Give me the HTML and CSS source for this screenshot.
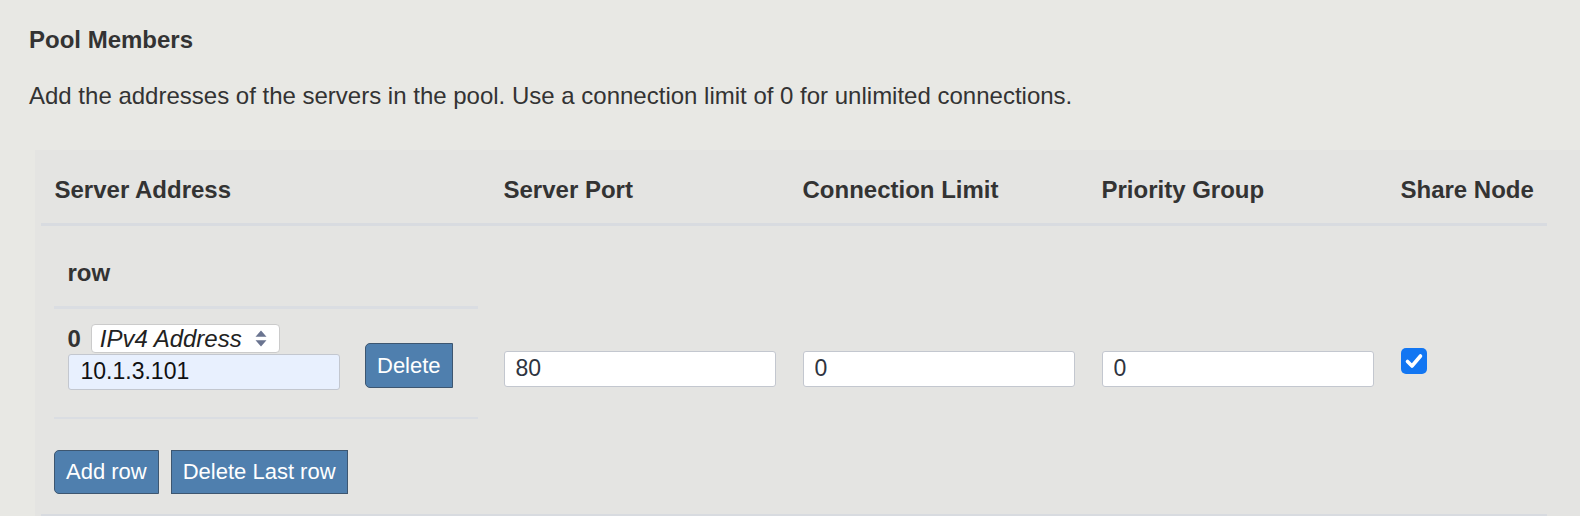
FILE: index.html
```html
<!DOCTYPE html>
<html lang="en">
<head>
<meta charset="utf-8">
<title>Pool Members</title>
<link rel="stylesheet" href="styles.css">
</head>
<body>
<div class="page">
  <h2 class="title">Pool Members</h2>
  <p class="desc">Add the addresses of the servers in the pool. Use a connection limit of 0 for unlimited connections.</p>
  <div class="panel">
    <table class="members">
      <colgroup>
        <col class="w-addr"><col class="w-mid"><col class="w-mid"><col class="w-mid"><col class="w-last">
      </colgroup>
      <thead>
        <tr>
          <th>Server Address</th>
          <th>Server Port</th>
          <th>Connection Limit</th>
          <th>Priority Group</th>
          <th>Share Node</th>
        </tr>
      </thead>
      <tbody>
        <tr>
          <td class="addr-cell">
            <table class="rows">
              <colgroup><col class="w-a"><col class="w-b"></colgroup>
              <thead><tr><th colspan="2">row</th></tr></thead>
              <tbody>
                <tr>
                  <td class="addr">
                    <div class="addr-top">
                      <span class="idx">0</span>
                      <span class="select"><span class="select-text">IPv4 Address</span><svg class="updown" width="12" height="17" viewBox="0 0 12 17"><path d="M6 0.5 L11.5 6.8 L0.5 6.8 Z M0.5 10.2 L11.5 10.2 L6 16.5 Z" fill="#6a7490"/></svg></span>
                    </div>
                    <input class="field autofill" type="text" value="10.1.3.101" readonly>
                  </td>
                  <td class="del"><button class="btn btn-left">Delete</button></td>
                </tr>
              </tbody>
            </table>
            <div class="actions">
              <button class="btn btn-left">Add row</button>
              <button class="btn">Delete Last row</button>
            </div>
          </td>
          <td><input class="field lift" type="text" value="80" readonly></td>
          <td><input class="field lift" type="text" value="0" readonly></td>
          <td><input class="field lift" type="text" value="0" readonly></td>
          <td><span class="check"><svg width="26" height="26" viewBox="0 0 26 26"><path d="M6.5 13.5 L11 18 L19.5 8" fill="none" stroke="#fff" stroke-width="3.6" stroke-linecap="round" stroke-linejoin="round"/></svg></span></td>
        </tr>
      </tbody>
    </table>
  </div>
</div>
</body>
</html>
```

FILE: styles.css
```css
html, body {
  margin: 0;
  padding: 0;
}
body {
  background: #e8e8e4;
  font-family: "Liberation Sans", Arial, Helvetica, sans-serif;
  color: #333;
  font-size: 24px;
  line-height: 1.15;
  overflow: hidden;
}
.page {
  padding: 26px 0 0 29px;
  border-left: 10px solid #eaeae7;
  margin-left: -10px;
  height: 516px;
  box-sizing: border-box;
  overflow: hidden;
}
.title {
  margin: 0;
  font-size: 24px;
  font-weight: bold;
  line-height: 1.15;
}
.desc {
  margin: 28px 0 0 0;
  font-size: 24px;
  line-height: 1.15;
}
.panel {
  margin: 41px 0 0 6px;
  padding: 6px 0 0 6px;
  background: #e4e4e2;
  height: 360px;
}
.members {
  border-collapse: collapse;
  table-layout: fixed;
  width: 1506px;
}
.w-addr { width: 449px; }
.w-mid { width: 299px; }
.w-last { width: 160px; }
.members > thead > tr > th {
  text-align: left;
  font-weight: bold;
  padding: 19.5px 13.5px 20px;
  border-bottom: 3px solid #d8dbe0;
  white-space: nowrap;
}
.members > tbody > tr > td {
  padding: 0 13.5px;
  vertical-align: middle;
  border-bottom: 2px solid #d8dbe0;
}
.members > tbody > tr > td.addr-cell {
  padding: 12px 12px 0 13px;
  vertical-align: top;
}
.rows {
  border-collapse: collapse;
  table-layout: fixed;
  width: 424px;
}
.w-a { width: 299px; }
.w-b { width: 125px; }
.rows > thead > tr > th {
  text-align: left;
  font-weight: bold;
  padding: 21px 13.5px 19px;
  border-bottom: 3px solid #dadde2;
}
.rows > tbody > tr > td {
  border-bottom: 2px solid #dadde2;
  vertical-align: middle;
}
.rows td.addr {
  padding: 15px 13.5px 27px;
}
.rows td.del {
  padding: 5px 12px 0;
}
.addr-top {
  display: flex;
  align-items: center;
  gap: 10px;
  margin-bottom: 1px;
}
.idx {
  font-weight: bold;
  font-size: 24px;
}
.select {
  display: inline-flex;
  align-items: center;
  box-sizing: border-box;
  width: 189px;
  height: 29px;
  padding: 0 0 0 8px;
  background: #fff;
  border: 1px solid #cbcbcb;
  border-radius: 4px;
  font-style: italic;
  font-size: 24px;
  color: #222;
  gap: 13px;
}
.select-text {
  white-space: nowrap;
}
.updown {
  display: block;
  flex: none;
}
.field {
  display: block;
  box-sizing: border-box;
  width: 272px;
  height: 36px;
  margin: 0;
  padding: 0 11px;
  background: #fff;
  border: 1px solid #c3c7cf;
  border-radius: 3px;
  font-family: "Liberation Sans", Arial, Helvetica, sans-serif;
  font-size: 23px;
  color: #2e3440;
  outline: none;
}
.field.lift {
  margin-bottom: 3px;
}
.field.autofill {
  background: #e8f0fe;
  color: #111;
  padding-left: 12px;
}
.actions {
  display: flex;
  gap: 12px;
  padding: 31px 0 20px 0;
}
.btn {
  margin: 0;
  padding: 8.5px 11px;
  background: #4f7fae;
  color: #fff;
  border: 1px solid #3d5670;
  border-radius: 0;
  font-family: "Liberation Sans", Arial, Helvetica, sans-serif;
  font-size: 22px;
  line-height: 1.15;
  white-space: nowrap;
}
.btn-left {
  border-radius: 5px 0 0 5px;
}
.check {
  display: block;
  width: 26px;
  height: 26px;
  margin-bottom: 18px;
  background: #1276f2;
  border-radius: 5px;
}
.check svg {
  display: block;
}
```
